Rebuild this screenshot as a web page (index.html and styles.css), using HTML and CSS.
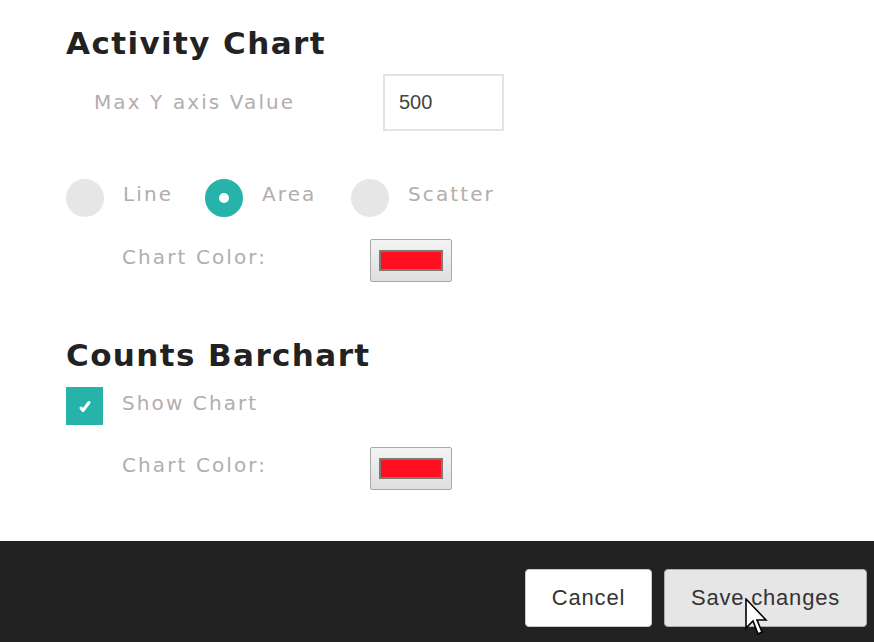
FILE: index.html
```html
<!DOCTYPE html>
<html lang="en">
<head>
  <meta charset="UTF-8">
  <title>Chart Settings</title>
  <link rel="stylesheet" href="styles.css">
</head>
<body>
  <div class="settings">
    <h2 class="section-title first">Activity Chart</h2>
    <div class="row max-row">
      <span class="label">Max Y axis Value</span>
      <input class="num-input" type="text" value="500">
    </div>
    <div class="row radio-row">
      <label class="radio"><span class="dot"></span><span class="label">Line</span></label>
      <label class="radio checked"><span class="dot"></span><span class="label">Area</span></label>
      <label class="radio"><span class="dot"></span><span class="label">Scatter</span></label>
    </div>
    <div class="row color-row">
      <span class="label">Chart Color:</span>
      <button class="swatch"><span class="swatch-fill"></span></button>
    </div>

    <h2 class="section-title">Counts Barchart</h2>
    <div class="row check-row">
      <span class="check">
        <svg width="16" height="16" viewBox="0 0 16 16"><path d="M4 10 L6 12.5 L12 4.5" fill="none" stroke="#fff" stroke-width="3" stroke-linecap="round" stroke-linejoin="round"/></svg>
      </span>
      <span class="label">Show Chart</span>
    </div>
    <div class="row color-row">
      <span class="label">Chart Color:</span>
      <button class="swatch"><span class="swatch-fill"></span></button>
    </div>
  </div>
  <div class="footer">
    <button class="btn">Cancel</button>
    <button class="btn btn-save">Save changes</button>
    <svg class="cursor" width="24" height="40" viewBox="0 0 24 40"><path d="M1 1 L1 30 L8 23 L13 36 L17 34 L12 22 L21 22 Z" fill="#fff" stroke="#000" stroke-width="1.6" stroke-linejoin="miter"/></svg>
  </div>
</body>
</html>
```

FILE: styles.css
```css
body { margin: 0; background: #fff; font-family: "DejaVu Sans", Verdana, sans-serif; height: 642px; display: flex; flex-direction: column; overflow: hidden; }
.settings { padding-left: 66px; flex: 1; }
.section-title { margin: 53px 0 0; height: 40px; line-height: 40px; font-size: 31px; letter-spacing: 1.4px; font-weight: bold; color: #222; }
.section-title.first { margin-top: 23px; }
.row { display: flex; align-items: center; }
.label { font-size: 20px; letter-spacing: 2.1px; color: #b3adab; padding-bottom: 7px; }
.max-row { margin-top: 11px; height: 57px; padding-left: 28px; }
.max-row .label { width: 289px; padding-bottom: 1px; }
.num-input { box-sizing: border-box; width: 121px; height: 57px; border: 2px solid #e3e3e3; padding: 0 14px; font-family: "Liberation Sans", Arial, sans-serif; font-size: 20px; color: #444; outline: none; }
.radio-row { margin-top: 47px; height: 39px; }
.radio { display: flex; align-items: center; }
.radio .dot { width: 38px; height: 38px; border-radius: 50%; background: #e6e6e6; margin-right: 19px; box-sizing: border-box; }
.radio.checked .dot { background: #fff; border: 14px solid #27b3aa; }
.radio:nth-child(1) .label { width: 82px; }
.radio:nth-child(2) .label { width: 89px; }
.color-row { margin-top: 22px; height: 43px; padding-left: 56px; }
.color-row .label { width: 248px; }
.swatch { box-sizing: border-box; width: 82px; height: 43px; border: 1px solid #a9a9a9; border-radius: 2px; background: linear-gradient(#f4f4f4, #dedede); padding: 0; display: flex; align-items: center; justify-content: center; }
.swatch-fill { box-sizing: border-box; width: 64px; height: 21px; background: #ff0f1f; border: 2px solid #7a7a7a; }
.check-row { margin-top: 12px; height: 38px; }
.check { width: 37px; height: 38px; background: #27b3aa; display: flex; align-items: center; justify-content: center; margin-right: 19px; }
.footer { position: relative; height: 101px; background: #222; display: flex; justify-content: flex-end; align-items: flex-start; gap: 12px; padding: 28px 7px 0 0; box-sizing: border-box; }
.btn { height: 58px; width: 127px; border: 1px solid #ccc; border-radius: 4px; background: #fff; font-family: "Liberation Sans", Arial, sans-serif; font-size: 22px; letter-spacing: 0.8px; color: #333; padding: 0; }
.btn-save { width: 203px; background: #e6e6e6; border-color: #adadad; }
.cursor { position: absolute; left: 745px; top: 57px; }
```
